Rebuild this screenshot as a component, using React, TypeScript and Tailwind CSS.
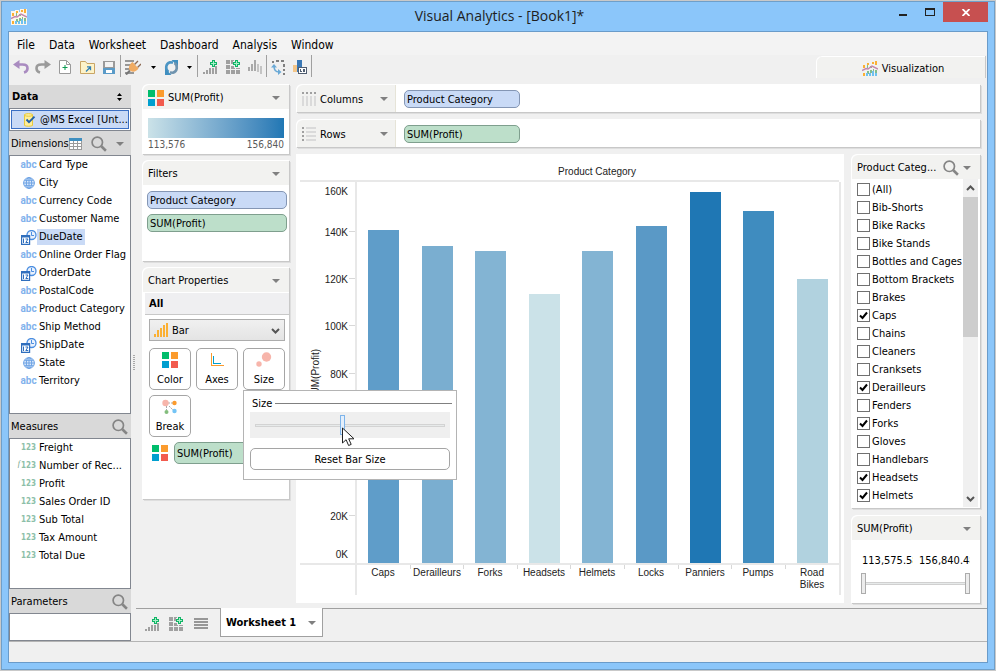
import type { ReactNode } from 'react';

const dimensions = [
  { name: 'Card Type', kind: 'text' },
  { name: 'City', kind: 'geo' },
  { name: 'Currency Code', kind: 'text' },
  { name: 'Customer Name', kind: 'text' },
  { name: 'DueDate', kind: 'date', selected: true },
  { name: 'Online Order Flag', kind: 'text' },
  { name: 'OrderDate', kind: 'date' },
  { name: 'PostalCode', kind: 'text' },
  { name: 'Product Category', kind: 'text' },
  { name: 'Ship Method', kind: 'text' },
  { name: 'ShipDate', kind: 'date' },
  { name: 'State', kind: 'geo' },
  { name: 'Territory', kind: 'text' },
];

const measures = [
  { name: 'Freight' },
  { name: 'Number of Rec...', calculated: true },
  { name: 'Profit' },
  { name: 'Sales Order ID' },
  { name: 'Sub Total' },
  { name: 'Tax Amount' },
  { name: 'Total Due' },
];

const categories = [
  { name: '(All)' },
  { name: 'Bib-Shorts' },
  { name: 'Bike Racks' },
  { name: 'Bike Stands' },
  { name: 'Bottles and Cages' },
  { name: 'Bottom Brackets' },
  { name: 'Brakes' },
  { name: 'Caps', checked: true },
  { name: 'Chains' },
  { name: 'Cleaners' },
  { name: 'Cranksets' },
  { name: 'Derailleurs', checked: true },
  { name: 'Fenders' },
  { name: 'Forks', checked: true },
  { name: 'Gloves' },
  { name: 'Handlebars' },
  { name: 'Headsets', checked: true },
  { name: 'Helmets', checked: true },
];

const bars = [
  { label: ['Caps'], top: 76, color: '#5f9dc9' },
  { label: ['Derailleurs'], top: 92, color: '#7aaed0' },
  { label: ['Forks'], top: 97, color: '#83b4d3' },
  { label: ['Headsets'], top: 140, color: '#cbe2e8' },
  { label: ['Helmets'], top: 97, color: '#83b4d3' },
  { label: ['Locks'], top: 72, color: '#5a99c6' },
  { label: ['Panniers'], top: 38, color: '#1f77b4' },
  { label: ['Pumps'], top: 57, color: '#3f8cbf' },
  { label: ['Road', 'Bikes'], top: 125, color: '#b1d2df' },
];

const yTicks = [
  { label: '160K', y: 37 },
  { label: '140K', y: 78, tick: true },
  { label: '120K', y: 125, tick: true },
  { label: '100K', y: 172, tick: true },
  { label: '80K', y: 220, tick: true },
  { label: '20K', y: 362, tick: true },
  { label: '0K', y: 400 },
];

/* ---------- icons ---------- */

function Caret() {
  return (
    <svg width="8" height="4" viewBox="0 0 8 4" className="shrink-0" aria-hidden="true">
      <path d="M0 0h8L4 4z" fill="#808080" />
    </svg>
  );
}

function SmallCaret() {
  return (
    <svg width="5" height="3" viewBox="0 0 5 3" aria-hidden="true">
      <path d="M0 0h5L2.5 3z" fill="#000" />
    </svg>
  );
}

function SearchIcon() {
  return (
    <svg width="16" height="16" viewBox="0 0 16 16" fill="none" className="shrink-0" aria-hidden="true">
      <circle cx="6.3" cy="6.3" r="5.2" stroke="#858585" strokeWidth="1.7" />
      <path d="M10.3 10.3l4.6 4.4" stroke="#858585" strokeWidth="2.6" />
    </svg>
  );
}

function FourSquares() {
  return (
    <svg width="16" height="16" viewBox="0 0 16 16" className="shrink-0" aria-hidden="true">
      <path fill="#00bd6c" d="M0 0h7v7H0z" />
      <path fill="#fb9b2d" d="M9 0h7v7H9z" />
      <path fill="#009fcf" d="M0 9h7v7H0z" />
      <path fill="#f25b4e" d="M9 9h7v7H9z" />
    </svg>
  );
}

function ChartLogo({ light = false }: { light?: boolean }) {
  return (
    <svg width="16" height="16" viewBox="0 0 16 16" aria-hidden="true">
      {light && <path fill="#fdf6ec" d="M0 2h4V1h4v2h1V0h7v16H0z" />}
      <path fill="#fbb034" d="M1 4h2v3H1zM1 12h2v3H1zM5 2h2v2H5zM10 1h2v2h-2zM13 0h2v4h-2z" />
      <path fill="#83bd8c" d="M5 4h1v3H5zM8 5h2v2H8zM5 10h2v3H5zM8 9h2v3H8zM11 8h1v3h-1zM13 9h2v3h-2z" />
      <path fill="#6ec1f0" d="M4 12h2v3H4zM7 12h2v3H7zM10 10h2v5h-2zM13 12h2v3h-2z" />
      <path d="M0 9.5l4-2 2 .5 4-3 6 3" stroke="#c487ad" strokeWidth="1.4" fill="none" />
    </svg>
  );
}

function UndoIcon({ flip = false }: { flip?: boolean }) {
  return (
    <svg width="16" height="14" viewBox="0 0 16 14" aria-hidden="true" className={flip ? '-scale-x-100' : ''}>
      <path
        d="M3 4.5h6.5c3.2 0 5 1.6 5 3.7S12.8 12 11 12.5"
        fill="none"
        stroke={flip ? '#9a9a9a' : '#a98bc0'}
        strokeWidth="2.6"
      />
      <path d="M6.5 0v9L0 4.5z" fill={flip ? '#9a9a9a' : '#a98bc0'} />
    </svg>
  );
}

function NewIcon() {
  return (
    <svg width="12" height="14" viewBox="0 0 12 14" aria-hidden="true">
      <path d="M.5.5h7l4 4v9H.5z" fill="#fff" stroke="#9a9a9a" />
      <path d="M7.5.5v4h4" fill="none" stroke="#9a9a9a" />
      <path d="M5.500 5h1v2h2v1h-2v2h-1V8h-2V7h2z" fill="#0b9a50" />
    </svg>
  );
}

function OpenIcon() {
  return (
    <svg width="15" height="13" viewBox="0 0 15 13" aria-hidden="true">
      <path d="M.5 12.500V.5h5l1.500 2h7.500v10z" fill="#fdf3c9" stroke="#c9a565" />
      <path d="M6 10.500l4-4M7 5.800h3.500V9.300" fill="none" stroke="#2f7fb5" strokeWidth="1.300" />
    </svg>
  );
}

function SaveIcon() {
  return (
    <svg width="12" height="13" viewBox="0 0 12 13" shapeRendering="crispEdges" aria-hidden="true">
      <path d="M0 0h12v7H0z" fill="#9a9a9a" />
      <path d="M2 1h8v5H2z" fill="#f3f3f3" />
      <path d="M0 7h12v6H0z" fill="#5a9bc8" />
      <path d="M3 9h6v3H3z" fill="#fff" />
    </svg>
  );
}

function PlugIcon() {
  return (
    <svg width="16" height="15" viewBox="0 0 16 15" aria-hidden="true">
      <path d="M0 0h9v2H0zM0 4h7v2H0zM0 8h5v2H0zM0 12h9v2H0z" fill="#979797" />
      <path d="M1 14.500l4-4" stroke="#777" strokeWidth="2" />
      <path d="M9.500 4.500L13 1M12.500 7.500L16 4" stroke="#8d6a52" strokeWidth="1.400" />
      <path d="M7.500 2l6 6.500c-2 3-6.500 4.500-9 1.500C3 7.500 4.500 4 7.500 2z" fill="#f0ab62" />
    </svg>
  );
}

function RefreshIcon() {
  return (
    <svg width="15" height="15" viewBox="0 0 15 15" aria-hidden="true">
      <path d="M4.500 12C1 9.500 1.500 3.500 6 2.300L9 2.500" fill="none" stroke="#4c95c4" strokeWidth="2.600" />
      <path d="M7.500 0H14v6.500z" fill="#3f8fc0" />
      <path d="M10.500 3c3.500 2.500 3 8.500-1.500 9.700L6 12.500" fill="none" stroke="#6f93ae" strokeWidth="2.600" />
      <path d="M7.500 15H1V8.500z" fill="#3f8fc0" />
    </svg>
  );
}

function PlusBadge() {
  return (
    <>
      <path d="M9 0h3v2h2v3h-2v2H9V5H7V2h2z" fill="#11b566" />
      <path d="M10 1h1v2h2v1h-2v2h-1V4H8V3h2z" fill="#a9efc9" />
    </>
  );
}

function AddChartIcon() {
  return (
    <svg width="14" height="14" viewBox="0 0 14 14" shapeRendering="crispEdges" aria-hidden="true">
      <path d="M0 12h2v2H0zM3 10h2v4H3zM6 8h2v6H6zM9 8h2v6H9zM12 6h2v8h-2z" fill="#a0a0a0" />
      <PlusBadge />
    </svg>
  );
}

function AddGridIcon() {
  return (
    <svg width="14" height="14" viewBox="0 0 14 14" shapeRendering="crispEdges" aria-hidden="true">
      <path d="M0 0h4v4H0zM5 0h3v1H5zM5 1h2v3H5zM0 5h4v4H0zM5 6h3v3H5zM8 8h1v1H8zM10 8h4v1h-4zM0 10h4v4H0zM5 10h4v4H5zM10 10h4v4h-4z" fill="#a0a0a0" />
      <PlusBadge />
    </svg>
  );
}

function SortBarsIcon() {
  return (
    <svg width="14" height="14" viewBox="0 0 14 14" shapeRendering="crispEdges" aria-hidden="true">
      <path d="M0 7h2v4H0zM3 4h2v7H3zM6 0h2v11H6z" fill="#a8a8a8" />
      <path d="M9 4h2v8H9zM12 6h2v8h-2z" fill="#c4c4c4" />
    </svg>
  );
}

function SwapIcon() {
  return (
    <svg width="15" height="15" viewBox="0 0 15 15" aria-hidden="true">
      <path d="M1 1h2v2H1zM5 0h3v2H5zM10 0h3v2h-3zM12 4h2v3h-2zM12 9h2v2h-2zM12 13h2v2h-2z" fill="#808080" />
      <path d="M3 6c0 4.500 1.500 6 5 6" fill="none" stroke="#6aa9d6" strokeWidth="1.500" />
      <path d="M0 7.500L3 4l3 3.500zM7 9l3.500 3L7 15z" fill="#6aa9d6" />
    </svg>
  );
}

function LabelsIcon() {
  return (
    <svg width="14" height="14" viewBox="0 0 14 14" shapeRendering="crispEdges" aria-hidden="true">
      <path d="M0 5h4v7H0z" fill="#f3c588" />
      <path d="M4 0h5v12H4z" fill="#3a78b5" />
      <path d="M5 7h9v7H5z" fill="#4f5d70" />
      <path d="M6 8h7v5H6z" fill="#fff" />
      <path d="M7 9h1v2h1v1H7zM10 9h2v3h-2z" fill="#4f5d70" />
    </svg>
  );
}

function MenuLinesIcon() {
  return (
    <svg width="14" height="11" viewBox="0 0 14 11" shapeRendering="crispEdges" aria-hidden="true">
      <path d="M0 0h14v2H0zM0 3h14v2H0zM0 6h14v2H0zM0 9h14v2H0z" fill="#979797" />
    </svg>
  );
}

function TableIcon() {
  return (
    <svg width="13" height="12" viewBox="0 0 13 12" shapeRendering="crispEdges" aria-hidden="true">
      <path d="M0 0h13v12H0z" fill="#9b9b9b" />
      <path d="M0 0h13v3H0z" fill="#3f8fc0" />
      <path d="M1 3h3v2H1zM5 3h3v2H5zM9 3h3v2H9zM1 6h3v2H1zM5 6h3v2H5zM9 6h3v2H9zM1 9h3v2H1zM5 9h3v2H5zM9 9h3v2H9z" fill="#fff" />
    </svg>
  );
}

function DatabaseIcon() {
  return (
    <svg width="12" height="14" viewBox="0 0 12 14" className="shrink-0" aria-hidden="true">
      <path d="M.5 1.500C2 .3 7 .3 8.500 1.500v11c-1.500 1-6.500 1-8 0z" fill="#fdee9a" stroke="#e8c93c" />
      <path d="M.5 2.500c2 1 6 1 8 0" fill="none" stroke="#e8c93c" />
      <path d="M2.500 6.500L5 9.200l5.500-5.500" fill="none" stroke="#1f5fa8" strokeWidth="1.900" />
    </svg>
  );
}

function GlobeIcon() {
  return (
    <svg width="12" height="12" viewBox="0 0 12 12" fill="none" stroke="#6ea3e4" aria-hidden="true">
      <circle cx="6" cy="6" r="5.400" fill="#dbe9fb" />
      <path d="M6 .5v11M.5 6h11M1.500 3.300h9M1.500 8.700h9" />
      <ellipse cx="6" cy="6" rx="2.700" ry="5.400" />
    </svg>
  );
}

function DateIcon() {
  return (
    <svg width="16" height="15" viewBox="0 0 16 15" fill="none" className="shrink-0" aria-hidden="true">
      <circle cx="10.500" cy="5" r="4.500" fill="#e9f1fd" stroke="#4b8ee0" strokeWidth="1.300" />
      <path d="M10.500 2v3.500h2.500" stroke="#4b8ee0" />
      <path d="M.6 5.500h8v8.800h-8z" fill="#fff" stroke="#2f6ebd" strokeWidth="1.200" />
      <path d="M0 5h9v2.500H0z" fill="#2f6ebd" />
      <path d="M2.500 8.500v4.500M4.500 9H7L4.800 12.500H7.300" stroke="#2f6ebd" />
    </svg>
  );
}

function ColumnsIcon() {
  return (
    <svg width="14" height="14" viewBox="0 0 14 14" shapeRendering="crispEdges" aria-hidden="true">
      <path d="M0 0h2v2H0zM4 0h2v2H4zM8 0h2v2H8zM12 0h2v2h-2z" fill="#a0a0a0" />
      <path d="M0 4h2v10H0zM4 4h2v10H4zM8 4h2v10H8zM12 4h2v10h-2z" fill="#dadada" />
    </svg>
  );
}

function RowsIcon() {
  return (
    <svg width="14" height="14" viewBox="0 0 14 14" shapeRendering="crispEdges" aria-hidden="true">
      <path d="M0 0h2v2H0zM0 4h2v2H0zM0 8h2v2H0zM0 12h2v2H0z" fill="#a0a0a0" />
      <path d="M4 0h10v2H4zM4 4h10v2H4zM4 8h10v2H4zM4 12h10v2H4z" fill="#dadada" />
    </svg>
  );
}

function BarTypeIcon() {
  return (
    <svg width="14" height="14" viewBox="0 0 14 14" shapeRendering="crispEdges" aria-hidden="true">
      <path d="M0 11h2v3H0zM3 7h2v7H3zM6 5h2v9H6zM9 2h2v12H9zM12 0h2v14h-2z" fill="#fbb033" />
    </svg>
  );
}

function AxesIcon() {
  return (
    <svg width="14" height="14" viewBox="0 0 14 14" fill="none" shapeRendering="crispEdges" aria-hidden="true">
      <path d="M1.500 0v12.500H14" stroke="#fb9b2d" />
      <path d="M3.500 3v7.500H11" stroke="#009fcf" />
    </svg>
  );
}

function SizeIcon() {
  return (
    <svg width="16" height="16" viewBox="0 0 16 16" fill="#f7b5ab" aria-hidden="true">
      <circle cx="10.500" cy="5" r="4.700" />
      <circle cx="3" cy="12" r="2.700" />
    </svg>
  );
}

function BreakIcon() {
  return (
    <svg width="16" height="16" viewBox="0 0 16 16" aria-hidden="true">
      <path d="M6 4h6M4.500 7v4M7 7l4 4" stroke="#a9a9a9" strokeDasharray="2 1" />
      <circle cx="3.500" cy="4" r="3.200" fill="#f7b5ab" />
      <circle cx="12.500" cy="4" r="2.200" fill="#fb9b2d" />
      <circle cx="4.500" cy="13" r="2" fill="#83bd7c" />
      <circle cx="12.500" cy="12" r="2.200" fill="#73c4f5" />
    </svg>
  );
}

function Chevron({ up = false }: { up?: boolean }) {
  return (
    <svg width="9" height="6" viewBox="0 0 9 6" className={up ? 'rotate-180' : ''} aria-hidden="true">
      <path d="M1 1l3.500 3.500L8 1" fill="none" stroke="#555" strokeWidth="2" />
    </svg>
  );
}

function Cursor() {
  return (
    <svg width="13" height="20" viewBox="0 0 13 20" aria-hidden="true">
      <path d="M.5 1v15l3.600-3.300L6.600 18.500l2.600-1.100-2.500-5.600H12z" fill="#fff" stroke="#222" />
    </svg>
  );
}

/* ---------- shared pieces ---------- */

function Panel({ children, className = '' }: { children: ReactNode; className?: string }) {
  return (
    <section
      className={`rounded-tl-md border-t border-l border-white bg-white shadow-[1px_1px_0_#c8c8c8,2px_2px_0_#dedede] ${className}`}
    >
      {children}
    </section>
  );
}

function PanelHeader({ title, icon, search = false }: { title: string; icon?: ReactNode; search?: boolean }) {
  return (
    <header className="flex h-6 items-center gap-1 rounded-tl-md bg-[#f2f2f0] pt-[2px] pr-[9px] pl-[5px]">
      {icon}
      <h2 className="flex-1 whitespace-nowrap">{title}</h2>
      {search && (
        <button type="button" aria-label={`Search ${title}`}>
          <SearchIcon />
        </button>
      )}
      <button type="button" aria-label={`${title} options`}>
        <Caret />
      </button>
    </header>
  );
}

function Pill({ color, children }: { color: 'blue' | 'green'; children: ReactNode }) {
  const tone = color === 'blue' ? 'border-[#8496b4] bg-[#c9daf6]' : 'border-[#7f9f8e] bg-[#bddfca]';
  return (
    <button type="button" className={`flex h-[18px] w-full items-center rounded-[5px] border px-[2px] pt-[2px] ${tone}`}>
      {children}
    </button>
  );
}

function ToolButton({ label, className = 'w-[22px]', children }: { label: string; className?: string; children: ReactNode }) {
  return (
    <button type="button" aria-label={label} className={`flex h-6 shrink-0 items-center justify-center ${className}`}>
      {children}
    </button>
  );
}

function Separator() {
  return <div className="h-[22px] w-px bg-[#a0a0a0]" />;
}

function SideHeader({ title, children }: { title: string; children?: ReactNode }) {
  return (
    <header className="flex h-6 items-center bg-[#d9d9d9] pt-[2px] pr-[3px] pl-[2px]">
      <h2 className="flex-1">{title}</h2>
      {children ?? (
        <button type="button" aria-label={`Search ${title}`}>
          <SearchIcon />
        </button>
      )}
    </header>
  );
}

function PropertyButton({ label, icon }: { label: string; icon: ReactNode }) {
  return (
    <button
      type="button"
      className="flex h-[42px] w-[42px] flex-col items-center justify-between rounded-[5px] border border-[#a5a5a5] bg-white pt-[3px] pb-px leading-4"
    >
      <span className="flex h-4 items-center">{icon}</span>
      {label}
    </button>
  );
}

/* ---------- window sections ---------- */

function TitleBar() {
  return (
    <div className="flex h-[30px] items-start">
      <div className="flex h-[30px] flex-1 items-center pl-[9px]">
        <ChartLogo light />
      </div>
      <h1 className="py-1 font-['Open_Sans',sans-serif] text-sm text-[#1e1e1e]">Visual Analytics - [Book1]*</h1>
      <div className="flex h-5 flex-1 justify-end pr-[6px]">
        <button type="button" aria-label="Minimize" className="flex w-7 items-center justify-center">
          <span className="mt-[6px] h-[2px] w-2 bg-[#222]" />
        </button>
        <button type="button" aria-label="Maximize" className="flex w-[26px] items-center justify-center">
          <span className="h-2 w-[10px] border border-t-2 border-[#222]" />
        </button>
        <button type="button" aria-label="Close" className="flex w-[45px] items-center justify-center bg-[#c75050]">
          <svg width="8" height="7" viewBox="0 0 8 7" aria-hidden="true">
            <path d="M.5 0L7.500 7M7.500 0L.5 7" stroke="#fff" strokeWidth="1.800" />
          </svg>
        </button>
      </div>
    </div>
  );
}

function MenuBar() {
  return (
    <nav className="flex h-[23px] items-center gap-[14px] bg-[#f3f3f3] px-2 pt-[2px] text-[12px]">
      {['File', 'Data', 'Worksheet', 'Dashboard', 'Analysis', 'Window'].map((item) => (
        <button key={item} type="button">
          {item}
        </button>
      ))}
    </nav>
  );
}

function Toolbar() {
  return (
    <div className="flex h-[29px] items-start pl-px">
      <ToolButton label="Undo"><UndoIcon /></ToolButton>
      <ToolButton label="Redo"><UndoIcon flip /></ToolButton>
      <ToolButton label="New"><NewIcon /></ToolButton>
      <ToolButton label="Open"><OpenIcon /></ToolButton>
      <ToolButton label="Save"><SaveIcon /></ToolButton>
      <Separator />
      <ToolButton label="Connect" className="w-6"><PlugIcon /></ToolButton>
      <ToolButton label="Connect options" className="w-4"><SmallCaret /></ToolButton>
      <ToolButton label="Refresh" className="w-5"><RefreshIcon /></ToolButton>
      <ToolButton label="Refresh options" className="w-4"><SmallCaret /></ToolButton>
      <Separator />
      <ToolButton label="New worksheet" className="w-6"><AddChartIcon /></ToolButton>
      <ToolButton label="New dashboard"><AddGridIcon /></ToolButton>
      <ToolButton label="Sort"><SortBarsIcon /></ToolButton>
      <Separator />
      <ToolButton label="Swap axes"><SwapIcon /></ToolButton>
      <ToolButton label="Show labels"><LabelsIcon /></ToolButton>
      <Separator />
      <button
        type="button"
        className="mt-px mr-[2px] ml-auto flex h-[22px] w-[169px] items-center justify-center gap-1 rounded-tl-md border-t border-l border-white bg-[#f2f2f0] pt-[3px] pl-1 shadow-[1px_0_0_#c8c8c8]"
      >
        <ChartLogo />
        Visualization
      </button>
    </div>
  );
}

function Sidebar() {
  return (
    <aside className="flex w-[122px] shrink-0 flex-col pt-px">
      <header className="flex h-[23px] items-center justify-between bg-[#d9d9d9] pr-[9px] pl-[3px] font-bold">
        <h2>Data</h2>
        <svg width="5" height="8" viewBox="0 0 5 8" aria-hidden="true">
          <path d="M0 3h5L2.500 0zM0 5h5L2.500 8z" fill="#000" />
        </svg>
      </header>
      <div className="border border-[#828790] bg-white p-px">
        <button type="button" className="flex h-[19px] w-full items-center gap-1 border border-[#3a6fc4] bg-[#c9daf6] pl-3 whitespace-nowrap">
          <DatabaseIcon />
          <span className="flex-1 text-left">@MS Excel [Unt...</span>
        </button>
      </div>
      <SideHeader title="Dimensions">
        <span className="flex items-center gap-[9px] pr-[5px]">
          <button type="button" aria-label="View data"><TableIcon /></button>
          <button type="button" aria-label="Search Dimensions"><SearchIcon /></button>
          <button type="button" aria-label="Dimensions options"><Caret /></button>
        </span>
      </SideHeader>
      <ul className="min-h-[258px] flex-1 border border-[#828790] bg-white">
        {dimensions.map((d) => (
          <li key={d.name} className="flex h-[18px] items-center pl-[10px]">
            <span className="flex w-[17px] shrink-0 justify-center">
              {d.kind === 'text' && (
                <span className="font-['Roboto',sans-serif] text-[10px] font-bold text-[#82b2ec]">abc</span>
              )}
              {d.kind === 'geo' && <GlobeIcon />}
              {d.kind === 'date' && <DateIcon />}
            </span>
            <span className={`px-[2px] leading-4 whitespace-nowrap ${d.selected ? 'bg-[#c9daf6]' : ''}`}>{d.name}</span>
          </li>
        ))}
      </ul>
      <SideHeader title="Measures" />
      <ul className="h-[151px] border border-[#828790] bg-white">
        {measures.map((m) => (
          <li key={m.name} className="flex h-[18px] items-center">
            <span className="flex w-[27px] shrink-0 justify-end pr-px text-[8px] font-bold text-[#8dbfa9]">
              {m.calculated && <i className="pr-px font-['Liberation_Serif',serif] leading-3 font-normal text-[#6f9f88]">f</i>}
              123
            </span>
            <span className="px-[2px] whitespace-nowrap">{m.name}</span>
          </li>
        ))}
      </ul>
      <SideHeader title="Parameters" />
      <div className="h-7 border border-[#828790] bg-white" />
    </aside>
  );
}

function SizePopup() {
  return (
    <div className="absolute top-full left-0 z-10 w-[214px] border border-[#b4b4b4] bg-white px-[6px] pb-[9px]">
      <div className="flex h-[21px] items-center gap-[3px] pt-1 pl-[2px]">
        <label htmlFor="bar-size">Size</label>
        <span className="-mr-[2px] h-px flex-1 bg-[#808080]" />
      </div>
      <div className="relative flex h-[26px] items-center bg-[#efefef] px-[5px]">
        <input
          id="bar-size"
          type="range"
          defaultValue={46}
          className="h-5 w-full appearance-none bg-transparent [&::-webkit-slider-runnable-track]:h-[3px] [&::-webkit-slider-runnable-track]:border [&::-webkit-slider-runnable-track]:border-[#d3d3d3] [&::-webkit-slider-runnable-track]:bg-[#e7eaea] [&::-webkit-slider-thumb]:-mt-[10px] [&::-webkit-slider-thumb]:h-5 [&::-webkit-slider-thumb]:w-[5px] [&::-webkit-slider-thumb]:appearance-none [&::-webkit-slider-thumb]:border [&::-webkit-slider-thumb]:border-[#7eb4ea] [&::-webkit-slider-thumb]:bg-[#e4effb]"
        />
        <span className="pointer-events-none absolute top-[15px] left-[92px]">
          <Cursor />
        </span>
      </div>
      <button type="button" className="mt-[10px] h-[22px] w-full rounded-[5px] border border-[#a5a5a5] bg-white pt-[2px]">
        Reset Bar Size
      </button>
    </div>
  );
}

function PropertiesColumn() {
  return (
    <div className="flex w-[147px] shrink-0 flex-col gap-[6px]">
      <Panel className="pb-[2px]">
        <PanelHeader title="SUM(Profit)" icon={<FourSquares />} />
        <div className="pt-[9px] pr-[5px] pl-[5px]">
          <div className="h-5 bg-linear-to-r from-[#cbe2e8] to-[#1f77b4]" />
          <div className="flex justify-between text-[10px] leading-[14px] text-[#5a5a5a]">
            <span>113,576</span>
            <span>156,840</span>
          </div>
        </div>
      </Panel>

      <Panel className="min-h-[101px]">
        <PanelHeader title="Filters" />
        <div className="flex flex-col gap-[5px] py-[6px] pr-[2px] pl-[4px]">
          <Pill color="blue">Product Category</Pill>
          <Pill color="green">SUM(Profit)</Pill>
        </div>
      </Panel>

      <Panel className="pb-[35px]">
        <PanelHeader title="Chart Properties" />
        <h3 className="ml-[2px] h-[23px] border-t border-b border-t-white border-b-[#c8c8c8] bg-[#efeff1] pl-1 leading-[22px] font-bold">All</h3>
        <div className="pr-[4px] pl-[6px]">
          <div className="relative mt-1">
            <span className="pointer-events-none absolute top-[4px] left-[5px]">
              <BarTypeIcon />
            </span>
            <select
              aria-label="Chart type"
              className="block h-[22px] w-full appearance-none border border-[#acacac] bg-linear-to-b from-[#f0f0f0] to-[#e4e4e4] pt-px pl-[22px]"
            >
              <option>Bar</option>
            </select>
            <span className="pointer-events-none absolute top-[9px] right-[5px]">
              <Chevron />
            </span>
          </div>
          <div className="mt-[7px] flex flex-wrap gap-[5px]">
            <PropertyButton label="Color" icon={<FourSquares />} />
            <PropertyButton label="Axes" icon={<AxesIcon />} />
            <div className="relative">
              <PropertyButton label="Size" icon={<SizeIcon />} />
              <SizePopup />
            </div>
            <PropertyButton label="Break" icon={<BreakIcon />} />
          </div>
          <div className="mt-[5px] flex items-center gap-[6px] pl-[3px]">
            <FourSquares />
            <button type="button" className="h-[22px] flex-1 rounded-[5px] border border-[#7f9f8e] bg-[#bddfca] px-[2px] pt-[2px] text-left">
              SUM(Profit)
            </button>
          </div>
        </div>
      </Panel>
    </div>
  );
}

function Shelf({ title, icon, children }: { title: string; icon: ReactNode; children: ReactNode }) {
  return (
    <Panel className="flex h-7 items-center">
      <div className="flex h-full w-[99px] items-center gap-1 rounded-tl-md border-r border-[#e6e4d8] bg-[#f2f2f0] pr-[7px] pl-[5px]">
        {icon}
        <h2 className="flex-1 pt-[2px]">{title}</h2>
        <button type="button" aria-label={`${title} options`}>
          <Caret />
        </button>
      </div>
      <div className="ml-2 w-[116px]">{children}</div>
    </Panel>
  );
}

function Chart() {
  return (
    <div className="flex-1 bg-white">
      <svg
        viewBox="0 0 548 449"
        className="block w-full font-['Liberation_Sans',Arial,sans-serif] text-[10px]"
        fill="#222"
        role="img"
        aria-label="SUM(Profit) by Product Category"
      >
        <text x="301" y="21" textAnchor="middle">Product Category</text>
        <g fill="#e8e8e8">
          <rect x="4" y="26" width="539" height="2" />
          <rect x="59" y="28" width="2" height="413" />
          <rect x="543" y="28" width="2" height="413" />
          <rect x="4" y="409" width="539" height="2" />
        </g>
        {yTicks.map((t) => (
          <g key={t.label}>
            {t.tick && <rect x="53" y={t.y - 1} width="6" height="1" fill="#d8d8d8" />}
            <text x="52" y={t.y + 4} textAnchor="end">{t.label}</text>
          </g>
        ))}
        <text transform="translate(23 221) rotate(-90)" textAnchor="middle">SUM(Profit)</text>
        {bars.map((b, i) => {
          const center = 87 + Math.round(i * 53.6);
          return (
            <g key={b.label[0]}>
              <rect x={center - 15} y={b.top} width="31" height={409 - b.top} fill={b.color} />
              {i > 0 && <rect x={center - 27} y="411" width="1" height="4" fill="#d8d8d8" />}
              {b.label.map((line, row) => (
                <text key={line} x={center} y={422 + row * 12} textAnchor="middle">{line}</text>
              ))}
            </g>
          );
        })}
      </svg>
    </div>
  );
}

const rangeClasses =
  'pointer-events-none absolute inset-0 w-full appearance-none bg-transparent [&::-webkit-slider-thumb]:pointer-events-auto [&::-webkit-slider-thumb]:h-[21px] [&::-webkit-slider-thumb]:w-[5px] [&::-webkit-slider-thumb]:appearance-none [&::-webkit-slider-thumb]:border [&::-webkit-slider-thumb]:border-[#acacac] [&::-webkit-slider-thumb]:bg-[#ececec]';

function FilterColumn() {
  return (
    <div className="flex w-[129px] shrink-0 flex-col gap-[7px]">
      <Panel className="flex flex-1 flex-col">
        <PanelHeader title="Product Categ..." search />
        <div className="flex flex-1 pr-[2px] pb-px">
          <ul className="flex-1 pt-px pl-[5px]">
            {categories.map((c) => (
              <li key={c.name}>
                <label className="flex h-[18px] items-center gap-[2px] whitespace-nowrap">
                  <span className="relative flex">
                    <input
                      type="checkbox"
                      defaultChecked={c.checked}
                      className="peer h-[13px] w-[13px] appearance-none border border-[#707070] bg-white"
                    />
                    <svg
                      width="9"
                      height="9"
                      viewBox="0 0 9 9"
                      className="pointer-events-none absolute top-[2px] left-[2px] hidden peer-checked:block"
                      aria-hidden="true"
                    >
                      <path d="M1 4.500L3.500 7 8 1.500" fill="none" stroke="#000" strokeWidth="2" />
                    </svg>
                  </span>
                  <span className="pt-px">{c.name}</span>
                </label>
              </li>
            ))}
          </ul>
          <div className="flex w-[15px] flex-col bg-[#f0f0f0]">
            <button type="button" aria-label="Scroll up" className="flex h-[18px] items-center justify-center">
              <Chevron up />
            </button>
            <div className="h-[140px] bg-[#cdcdcd]" />
            <button type="button" aria-label="Scroll down" className="mt-auto flex h-[17px] items-center justify-center">
              <Chevron />
            </button>
          </div>
        </div>
      </Panel>

      <Panel className="pb-[9px]">
        <PanelHeader title="SUM(Profit)" />
        <div className="pt-[11px] pr-[10px] pl-[9px]">
          <div className="flex justify-between gap-[6px] pl-px">
            <input aria-label="Minimum profit" defaultValue="113,575.58" className="w-0 flex-1 bg-white leading-5" />
            <input aria-label="Maximum profit" defaultValue="156,840.48" className="w-0 flex-1 bg-white leading-5" />
          </div>
          <div className="relative mt-[2px] flex h-[21px] items-center">
            <span className="h-[3px] w-full border border-[#d0d0d0] bg-[#e7eaea]" />
            <input type="range" aria-label="Minimum" defaultValue={0} className={rangeClasses} />
            <input type="range" aria-label="Maximum" defaultValue={100} className={rangeClasses} />
          </div>
        </div>
      </Panel>
    </div>
  );
}

function SheetTabs() {
  return (
    <div className="flex h-[33px] items-start">
      <div className="flex h-[30px] w-[84px] items-center border-t border-[#a0a0a0] pl-1">
        <ToolButton label="New worksheet" className="w-6"><AddChartIcon /></ToolButton>
        <ToolButton label="New dashboard" className="w-6"><AddGridIcon /></ToolButton>
        <ToolButton label="Sheet list" className="w-[26px]"><MenuLinesIcon /></ToolButton>
      </div>
      <button
        type="button"
        className="flex h-[29px] w-[103px] items-center justify-between border border-t-0 border-[#a0a0a0] bg-white pt-[2px] pr-[6px] pl-[5px] font-bold whitespace-nowrap"
      >
        Worksheet 1
        <Caret />
      </button>
      <div className="flex-1 border-t border-[#a0a0a0]" />
    </div>
  );
}

export default function App() {
  return (
    <div className="flex min-h-screen w-full flex-col border border-[#c9c9c9] bg-[#8bc6fa] font-['DejaVu_Sans_Condensed','Open_Sans',sans-serif] text-[11px] leading-4 text-black">
      <div className="flex flex-1 flex-col border border-[#6f9fc9]">
        <TitleBar />
        <div className="mx-[6px] mb-[6px] -mt-px flex flex-1 flex-col border border-[#6a9bc9] bg-[#f0f0f0]">
          <MenuBar />
          <Toolbar />
          <div className="flex flex-1">
            <Sidebar />
            <div className="flex w-[5px] shrink-0 items-center justify-center">
              <div className="h-4 w-[2px] bg-[repeating-linear-gradient(#a8a8a8_0_1px,transparent_1px_2px)]" />
            </div>
            <div className="flex min-w-0 flex-1 flex-col">
              <div className="flex flex-1 gap-[7px] pr-[7px] pb-[5px] pl-[6px]">
                <PropertiesColumn />
                <main className="flex min-w-0 flex-1 flex-col gap-[7px]">
                  <Shelf title="Columns" icon={<ColumnsIcon />}>
                    <Pill color="blue">Product Category</Pill>
                  </Shelf>
                  <Shelf title="Rows" icon={<RowsIcon />}>
                    <Pill color="green">SUM(Profit)</Pill>
                  </Shelf>
                  <div className="flex flex-1 gap-[7px]">
                    <Chart />
                    <FilterColumn />
                  </div>
                </main>
              </div>
              <SheetTabs />
            </div>
          </div>
          <footer className="h-[21px] border-t border-[#b4b4b4]" />
        </div>
      </div>
    </div>
  );
}
